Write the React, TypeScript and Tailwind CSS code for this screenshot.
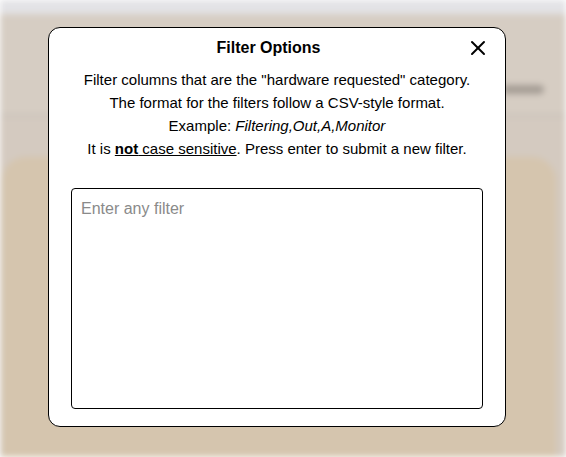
import React from 'react';
import { X } from 'lucide-react';

const Backdrop: React.FC = () => (
    <div className="absolute inset-0 overflow-hidden bg-[#d4cac0] blur-[3px]">
        <div className="h-[14px] bg-[#e3e3e6]" />
        <div className="flex h-[100px] items-end justify-end bg-[#d6cdc3] pr-[22px] pb-[20px]">
            <div className="h-[9px] w-[42px] rounded-full bg-[#a59d95]" />
        </div>
        <div className="h-[3px] bg-[#cbc3bb]" />
        <div className="h-[40px]" />
        <div className="ml-[2px] h-[320px] w-[554px] rounded-[24px] bg-[#d5c5ae]" />
    </div>
);

export default function App() {
    return (
        <div className="relative h-[457px] w-[566px] overflow-hidden" style={{ fontFamily: '"Liberation Sans", Arial, sans-serif' }}>
            <Backdrop />
            <div className="relative pt-[27px] pl-[48px]">
                <div className="flex h-[400px] w-[458px] flex-col rounded-[12px] border border-black bg-white px-[22px] pt-[8px] pb-[17px] text-black">
                    <div className="flex h-[24px] items-center">
                        <h2 className="flex-1 text-center text-[16px] font-bold">Filter Options</h2>
                        <button className="-mr-[7px] flex h-[24px] w-[24px] items-center justify-center">
                            <X className="h-[24px] w-[24px]" strokeWidth={2} />
                        </button>
                    </div>
                    <div className="mt-[8px] text-center text-[15px] leading-[23px]">
                        <p>Filter columns that are the "hardware requested" category.</p>
                        <p>The format for the filters follow a CSV-style format.</p>
                        <p>Example: <i>Filtering,Out,A,Monitor</i></p>
                        <p>It is <u><b>not</b> case sensitive</u>. Press enter to submit a new filter.</p>
                    </div>
                    <textarea
                        placeholder="Enter any filter"
                        className="mt-[28px] flex-1 resize-none rounded-[4px] border border-black px-[9px] py-[8px] text-[16px] outline-none placeholder:text-[#8a8a8a]"
                    />
                </div>
            </div>
        </div>
    );
}
